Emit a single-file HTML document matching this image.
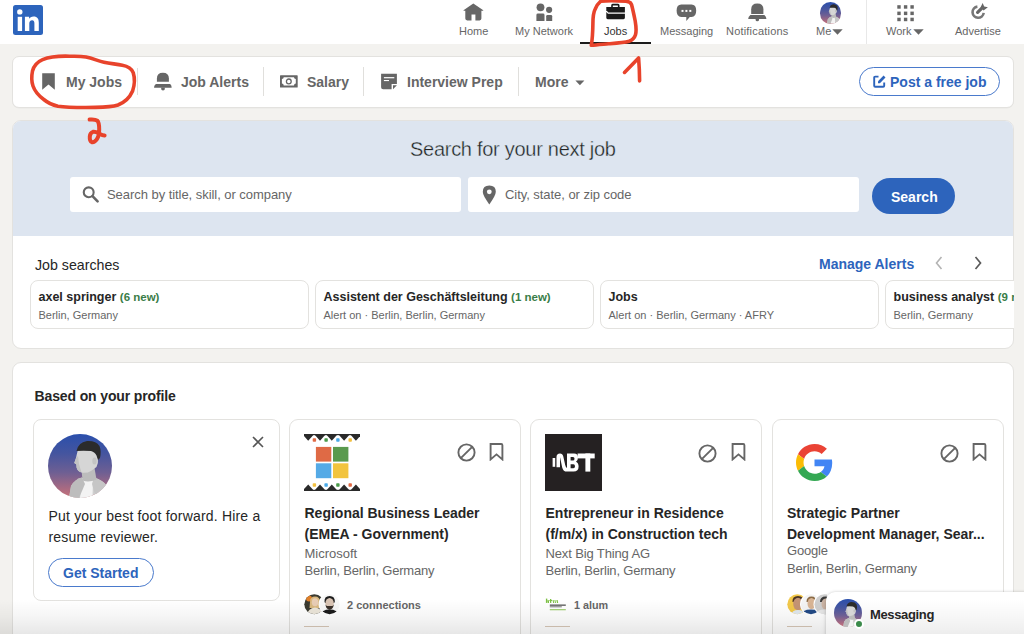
<!DOCTYPE html>
<html><head><meta charset="utf-8">
<style>
*{margin:0;padding:0;box-sizing:border-box}
html,body{width:1024px;height:634px;overflow:hidden}
body{background:#f3f2ef;font-family:"Liberation Sans",sans-serif;position:relative;color:#1f1f1f}
.abs{position:absolute}
.nav{position:absolute;left:0;top:0;width:1024px;height:44px;background:#fff}
.ni{position:absolute;top:0;height:44px;text-align:center;font-size:11px;color:#666;white-space:nowrap}
.ni svg{position:absolute}
.nl{position:absolute;top:25px;white-space:nowrap;line-height:12px;font-size:11px;color:#666}
.card{position:absolute;background:#fff;border:1px solid #e3e2df;border-radius:9px}
.sub{font-size:14px;font-weight:bold;color:#666;white-space:nowrap;line-height:16px}
.div{position:absolute;width:1px;background:#e0dfdc}
.hero{position:absolute;left:12px;top:120px;width:1002px;height:116px;background:#dde5f0;border-radius:9px 9px 0 0}
.inp{position:absolute;background:#fff;border-radius:3px;height:35px;top:177px}
.ph{position:absolute;font-size:13px;color:#666;white-space:nowrap;line-height:15px;letter-spacing:-0.05px}
.pill{position:absolute;background:#fff;border:1px solid #e3e2df;border-radius:8px;height:49px;top:280px}
.pt{position:absolute;left:7.5px;top:9px;font-size:12.5px;font-weight:bold;color:#262626;white-space:nowrap;line-height:15px}
.pt span{color:#3a7d48;font-size:11.5px}
.ps{position:absolute;left:7.5px;top:27.5px;font-size:11px;color:#666;white-space:nowrap;line-height:13px}
.jc{position:absolute;background:#fff;border:1px solid #e3e2df;border-radius:9px;top:419px;height:240px}
.jt{position:absolute;font-size:14px;font-weight:bold;color:#262626;line-height:21px;white-space:nowrap}
.jco{position:absolute;font-size:13px;color:#666;white-space:nowrap;line-height:16px}
.loc{letter-spacing:-0.2px}
.red{position:absolute;left:0;top:0}
</style></head>
<body>
<!-- NAV -->
<div class="nav">
  <svg class="abs" style="left:13px;top:5px" width="30" height="30" viewBox="0 0 30 30">
    <rect x="0" y="0" width="30" height="30" rx="2.5" fill="#2d64bc"/>
    <circle cx="6.8" cy="6.9" r="2.7" fill="#fff"/>
    <rect x="4.7" y="11.8" width="4.4" height="14.2" fill="#fff"/>
    <path d="M11.9 11.8h4.2v2c.7-1.3 2.3-2.3 4.4-2.3 4 0 5.3 2.4 5.3 6V26h-4.4v-7.6c0-1.8-.4-3.2-2.3-3.2-1.9 0-2.8 1.4-2.8 3.4V26h-4.4z" fill="#fff"/>
  </svg>

  <!-- Home -->
  <svg class="abs" style="left:463px;top:3px" width="21" height="18" viewBox="0 0 21 18">
    <path d="M10.3 0.6 L20.3 7.2 L20.2 7.8 L18.4 7.8 L18.4 15.6 Q18.4 17.4 16.6 17.4 L12.4 17.4 L12.4 11.6 L8.5 11.6 L8.5 17.4 L4.2 17.4 Q2.3 17.4 2.3 15.6 L2.3 7.8 L0.6 7.8 L0.5 7.2 Z" fill="#666"/>
  </svg>
  <div class="nl" style="left:459px">Home</div>
  <!-- My Network -->
  <svg class="abs" style="left:536px;top:3px" width="17" height="19" viewBox="0 0 17 19">
    <circle cx="4.5" cy="4.3" r="3.9" fill="#666"/>
    <path d="M0.4 11.9 Q0.4 10.5 2 10.5 L7 10.5 Q8.5 10.5 8.5 11.9 L8.5 18 L0.4 18 Z" fill="#666"/>
    <circle cx="13.1" cy="6.8" r="3.1" fill="#666"/>
    <path d="M10.2 13.3 Q10.2 12.1 11.4 12.1 L15 12.1 Q16.2 12.1 16.2 13.3 L16.2 18 L10.2 18 Z" fill="#666"/>
  </svg>
  <div class="nl" style="left:515px">My Network</div>
  <!-- Jobs -->
  <svg class="abs" style="left:605px;top:3px" width="22" height="18" viewBox="0 0 22 18">
    <path d="M6.2 4 L6.2 2.2 Q6.2 0.7 7.7 0.7 L13 0.7 Q14.5 0.7 14.5 2.2 L14.5 4 L12.9 4 L12.9 2.4 L7.8 2.4 L7.8 4 Z" fill="#1b1b1b"/>
    <path d="M1.3 4 L19.9 4 L19.9 9.6 L3.3 9.6 L1.3 7.3 Z" fill="#1b1b1b"/>
    <path d="M1.3 9 L3.0 10.8 L19.9 10.8 L19.9 14.8 Q19.9 16.2 18.5 16.2 L2.7 16.2 Q1.3 16.2 1.3 14.8 Z" fill="#1b1b1b"/>
  </svg>
  <div class="nl" style="left:604px;color:#333">Jobs</div>
  <div class="abs" style="left:580px;top:42px;width:71px;height:2px;background:#1b1b1b"></div>
  <!-- Messaging -->
  <svg class="abs" style="left:676px;top:4px" width="21" height="18" viewBox="0 0 21 18">
    <path d="M5.3 0.4 L15.5 0.4 Q20.2 0.4 20.2 6.5 Q20.2 13 15.5 13 L13.8 13 L10.3 17 L10.3 13 L5.3 13 Q0.6 13 0.6 6.5 Q0.6 0.4 5.3 0.4 Z" fill="#666"/>
    <rect x="5.5" y="5.9" width="2" height="2" fill="#fff"/>
    <rect x="9.4" y="5.9" width="2" height="2" fill="#fff"/>
    <rect x="13.3" y="5.9" width="2" height="2" fill="#fff"/>
  </svg>
  <div class="nl" style="left:660px">Messaging</div>
  <!-- Notifications -->
  <svg class="abs" style="left:748px;top:3px" width="19" height="19" viewBox="0 0 19 19">
    <path d="M3.2 10.9 L3.2 6.3 Q3.2 0.4 9.3 0.4 Q15.4 0.4 15.4 6.3 L15.4 10.9 Z" fill="#666"/>
    <path d="M2.4 12.1 L16.4 12.1 Q18.3 14 18.3 15.2 L18.3 15.9 L0.3 15.9 L0.3 15.2 Q0.3 14 2.4 12.1 Z" fill="#666"/>
    <path d="M7.6 15.5 L11 15.5 L11 17 Q11 18.3 9.3 18.3 Q7.6 18.3 7.6 17 Z" fill="#666"/>
  </svg>
  <div class="nl" style="left:726px;letter-spacing:0.2px">Notifications</div>
  <!-- Me -->
  <div class="abs" style="left:819.5px;top:2.3px;width:21.5px;height:21.5px;border-radius:50%;overflow:hidden;background:linear-gradient(180deg,#2a4fac 0%,#44559f 30%,#6e5f93 60%,#a86a82 85%,#c9737a 100%)">
  <svg width="21.5" height="21.5" viewBox="0 0 64 64" class="abs" style="left:0;top:0">
    <path d="M21 64 L23 52 Q27 45 34 43.5 L38 47.5 L46 43.5 Q55 46 59 52 L63 64 Z" fill="#cfcfcf"/>
    <path d="M34 44 L45 44.5 L44.5 64 L32 64 Z" fill="#f3f3f3"/>
    <path d="M23 52 Q27 45 34 43.5 L37 50 L31 64 L21 64 Z" fill="#bdbdbd"/>
    <path d="M46 43.5 Q55 46 59 52 L63 64 L48 64 L44 50 Z" fill="#c6c6c6"/>
    <path d="M33.5 36 L46.5 34 L48.5 45.5 Q41 49 34.5 46.5 Z" fill="#bcbcbc"/>
    <path d="M30 15.5 Q28.5 21 28 24 L26.3 29 L28.4 30.4 L28.6 33.5 Q29.5 37.5 33.5 38.6 Q39 39.5 43 37 L48.5 33 Q50.5 28.5 50 24 L48 17 Q40 13 30 15.5 Z" fill="#d6d6d6"/>
    <path d="M28 24 L26.3 29 L28.4 30.4 L28.6 33.5 Q29.5 37.5 33.5 38.6 L31 30 L30 22 Z" fill="#c2c2c2"/>
    <path d="M28.5 17 Q30 8.5 39 7 Q48 6.5 51.5 12 Q53.5 17 52 24 L50 26 L48.5 21.5 Q47 18 43 17 Q35 16.5 28.5 17 Z" fill="#2b2b2b"/>
    <ellipse cx="46.5" cy="27" rx="2.2" ry="3.6" fill="#c4c4c4"/>
  </svg>
</div>
  <div class="nl" style="left:816px">Me</div>
  <svg class="abs" style="left:832px;top:29px" width="11" height="6" viewBox="0 0 11 6"><path d="M0.3 0.2 L10.7 0.2 L5.5 5.8 Z" fill="#666"/></svg>
  <div class="abs" style="left:866px;top:0;width:1px;height:44px;background:#e8e8e8"></div>
  <!-- Work -->
  <svg class="abs" style="left:897px;top:5px" width="17" height="17" viewBox="0 0 17 17">
    <g fill="#666">
    <rect x="0.3" y="0.2" width="3.4" height="3.5"/><rect x="6.9" y="0.2" width="3.4" height="3.5"/><rect x="13.4" y="0.2" width="3.4" height="3.5"/>
    <rect x="0.3" y="6.6" width="3.4" height="3.5"/><rect x="6.9" y="6.6" width="3.4" height="3.5"/><rect x="13.4" y="6.6" width="3.4" height="3.5"/>
    <rect x="0.3" y="12.7" width="3.4" height="3.5"/><rect x="6.9" y="12.7" width="3.4" height="3.5"/><rect x="13.4" y="12.7" width="3.4" height="3.5"/>
    </g>
  </svg>
  <div class="nl" style="left:886px">Work</div>
  <svg class="abs" style="left:913px;top:29px" width="11" height="6" viewBox="0 0 11 6"><path d="M0.3 0.2 L10.7 0.2 L5.5 5.8 Z" fill="#666"/></svg>
  <!-- Advertise -->
  <svg class="abs" style="left:969px;top:2px" width="21" height="19" viewBox="0 0 21 19">
    <path d="M8.4 4.6 A5.6 5.6 0 1 0 14.7 10.9" fill="none" stroke="#777" stroke-width="2.6"/>
    <path d="M8.6 10.4 L13.4 5.6" stroke="#666" stroke-width="3.2" stroke-linecap="round"/>
    <path d="M11.6 5.2 L13.6 0.9 L15.2 4.4 L18.9 5.3 L14.6 8.6 Z" fill="#666"/>
  </svg>
  <div class="nl" style="left:955px">Advertise</div>
</div>

<!-- SUBNAV -->
<div class="card" style="left:12px;top:56px;width:1002px;height:51.5px;border-radius:7px;box-shadow:0 0.5px 0.5px rgba(0,0,0,0.04)"></div>
<svg class="abs" style="left:42px;top:73px" width="13" height="17" viewBox="0 0 13 17"><path d="M0.2 0.2 L12.8 0.2 L12.8 16.8 L6.5 11.4 L0.2 16.8 Z" fill="#666"/></svg>
<div class="abs sub" style="left:66px;top:74px">My Jobs</div>
<div class="div" style="left:137px;top:68px;height:27px"></div>
<svg class="abs" style="left:154px;top:72px" width="18" height="19" viewBox="0 0 18 19">
  <path d="M2.9 9.85 L2.9 6.5 Q2.9 0.7 8.9 0.7 Q14.9 0.7 14.9 6.5 L14.9 9.85 Z" fill="#666"/>
  <path d="M1.9 12 L16.2 12 Q17.6 13.5 17.6 15 L17.6 15.8 L0.1 15.8 L0.1 15 Q0.1 13.5 1.9 12 Z" fill="#666"/>
  <path d="M7.2 15.5 L10.8 15.5 L10.8 17 Q10.8 18.4 9 18.4 Q7.2 18.4 7.2 17 Z" fill="#666"/>
</svg>
<div class="abs sub" style="left:181px;top:74px">Job Alerts</div>
<div class="div" style="left:263px;top:67px;height:29px"></div>
<svg class="abs" style="left:280px;top:75px" width="18" height="13" viewBox="0 0 18 13">
  <rect x="0" y="0.3" width="17.7" height="12.2" rx="0.6" fill="#666"/>
  <path d="M3.7 2.2 L14.0 2.2 A1.8 1.8 0 0 0 15.8 4.0 L15.8 8.6 A1.8 1.8 0 0 0 14.0 10.4 L3.7 10.4 A1.8 1.8 0 0 0 1.9 8.6 L1.9 4.0 A1.8 1.8 0 0 0 3.7 2.2 Z" fill="#fff"/>
  <circle cx="8.8" cy="6.4" r="2.4" fill="none" stroke="#666" stroke-width="1.3"/>
</svg>
<div class="abs sub" style="left:307px;top:74px">Salary</div>
<div class="div" style="left:363px;top:67px;height:29px"></div>
<svg class="abs" style="left:381px;top:73px" width="17" height="17" viewBox="0 0 17 17">
  <path d="M0.1 0.75 L15.9 0.75 L15.9 11 L10.6 11 L10.6 16.3 L2.1 16.3 Q0.1 16.3 0.1 14.3 Z" fill="#666"/>
  <path d="M12 12.2 L15.9 12.2 L12 16.2 Z" fill="#666"/>
  <rect x="2.9" y="4.1" width="10.4" height="1.2" fill="#fff"/><rect x="2.9" y="7.0" width="5.1" height="1.1" fill="#fff"/>
</svg>
<div class="abs sub" style="left:407px;top:74px">Interview Prep</div>
<div class="div" style="left:518px;top:67px;height:29px"></div>
<div class="abs sub" style="left:535px;top:74px">More</div>
<svg class="abs" style="left:575px;top:80px" width="10" height="6" viewBox="0 0 10 6"><path d="M0.4 0.6 L9.4 0.6 L4.9 5.2 Z" fill="#666"/></svg>
<div class="abs" style="left:859px;top:67px;width:141px;height:29px;border:1px solid #4a7acc;border-radius:15px"></div>
<svg class="abs" style="left:873px;top:75px" width="13" height="13" viewBox="0 0 13 13">
  <path d="M5.5 1.6 L2.2 1.6 Q1.2 1.6 1.2 2.6 L1.2 10.8 Q1.2 11.8 2.2 11.8 L10.2 11.8 Q11.2 11.8 11.2 10.8 L11.2 7.4" fill="none" stroke="#2d64bc" stroke-width="1.9"/>
  <path d="M5 8.2 L5 6.2 L10.6 0.6 L12.5 2.5 L6.9 8.2 Z" fill="#2d64bc"/>
</svg>
<div class="abs sub" style="left:890px;top:74px;color:#2d64bc">Post a free job</div>

<!-- SEARCH CARD -->
<div class="card" style="left:12px;top:120px;width:1002px;height:229px;border-radius:9px;overflow:hidden">
  <div class="abs" style="left:0;top:0;width:1000px;height:115px;background:#dde5f0"></div>
</div>
<div class="abs" style="left:410px;top:138px;font-size:20px;color:#222;white-space:nowrap;line-height:23px;letter-spacing:-0.28px;-webkit-text-stroke:0.35px #dde5f0">Search for your next job</div>
<div class="inp" style="left:70px;width:391px"></div>
<svg class="abs" style="left:82px;top:186px" width="19" height="18" viewBox="0 0 19 18">
  <circle cx="6.7" cy="6.3" r="4.95" fill="none" stroke="#666" stroke-width="2.1"/>
  <path d="M10.5 10.2 L15.6 15.3" stroke="#666" stroke-width="2.6" stroke-linecap="round"/>
</svg>
<div class="ph" style="left:107px;top:187px">Search by title, skill, or company</div>
<div class="inp" style="left:468px;width:391px"></div>
<svg class="abs" style="left:482px;top:185px" width="15" height="20" viewBox="0 0 15 20">
  <path d="M7.3 0.4 Q13.8 0.4 13.8 6.8 Q13.8 10.5 7.3 19.4 Q0.8 10.5 0.8 6.8 Q0.8 0.4 7.3 0.4 Z" fill="#666"/>
  <circle cx="7.3" cy="6.8" r="2.4" fill="#fff"/>
</svg>
<div class="ph" style="left:505px;top:187px">City, state, or zip code</div>
<div class="abs" style="left:872px;top:178px;width:83px;height:36px;border-radius:18px;background:#2d64bc"></div>
<div class="abs sub" style="left:891px;top:189px;color:#fff">Search</div>

<div class="abs" style="left:35px;top:257px;font-size:14.2px;color:#262626;white-space:nowrap;line-height:17px">Job searches</div>
<div class="abs sub" style="left:819px;top:256px;color:#2d64bc">Manage Alerts</div>
<svg class="abs" style="left:934px;top:256px" width="10" height="14" viewBox="0 0 10 14"><path d="M7.5 1 L2.5 7 L7.5 13" fill="none" stroke="#b3b3b3" stroke-width="1.6"/></svg>
<svg class="abs" style="left:973px;top:256px" width="10" height="14" viewBox="0 0 10 14"><path d="M2.5 1 L7.5 7 L2.5 13" fill="none" stroke="#5a5a5a" stroke-width="1.7"/></svg>

<div class="pill" style="left:30px;width:279px"><div class="pt">axel springer <span>(6 new)</span></div><div class="ps">Berlin, Germany</div></div>
<div class="pill" style="left:315px;width:279px"><div class="pt">Assistent der Geschäftsleitung <span>(1 new)</span></div><div class="ps">Alert on · Berlin, Berlin, Germany</div></div>
<div class="pill" style="left:600px;width:279px"><div class="pt">Jobs</div><div class="ps">Alert on · Berlin, Germany · AFRY</div></div>
<div class="abs" style="left:885px;top:280px;width:129px;height:49px;overflow:hidden">
  <div class="pill" style="left:0;top:0;width:279px"><div class="pt">business analyst <span>(9 new)</span></div><div class="ps">Berlin, Germany</div></div>
</div>

<!-- PROFILE SECTION -->
<div class="card" style="left:12px;top:362px;width:1002px;height:300px;border-radius:9px"></div>
<div class="abs sub" style="left:34.5px;top:387.5px;color:#262626;letter-spacing:-0.13px">Based on your profile</div>

<!-- Card A -->
<div class="card" style="left:33px;top:419px;width:247px;height:182px;border-radius:8px"></div>
<div class="abs" style="left:48px;top:434px;width:64px;height:64px;border-radius:50%;overflow:hidden;background:linear-gradient(180deg,#2a4fac 0%,#44559f 30%,#6e5f93 60%,#a86a82 85%,#c9737a 100%)">
  <svg width="64" height="64" viewBox="0 0 64 64" class="abs" style="left:0;top:0">
    <path d="M21 64 L23 52 Q27 45 34 43.5 L38 47.5 L46 43.5 Q55 46 59 52 L63 64 Z" fill="#cfcfcf"/>
    <path d="M34 44 L45 44.5 L44.5 64 L32 64 Z" fill="#f3f3f3"/>
    <path d="M23 52 Q27 45 34 43.5 L37 50 L31 64 L21 64 Z" fill="#bdbdbd"/>
    <path d="M46 43.5 Q55 46 59 52 L63 64 L48 64 L44 50 Z" fill="#c6c6c6"/>
    <path d="M33.5 36 L46.5 34 L48.5 45.5 Q41 49 34.5 46.5 Z" fill="#bcbcbc"/>
    <path d="M30 15.5 Q28.5 21 28 24 L26.3 29 L28.4 30.4 L28.6 33.5 Q29.5 37.5 33.5 38.6 Q39 39.5 43 37 L48.5 33 Q50.5 28.5 50 24 L48 17 Q40 13 30 15.5 Z" fill="#d6d6d6"/>
    <path d="M28 24 L26.3 29 L28.4 30.4 L28.6 33.5 Q29.5 37.5 33.5 38.6 L31 30 L30 22 Z" fill="#c2c2c2"/>
    <path d="M28.5 17 Q30 8.5 39 7 Q48 6.5 51.5 12 Q53.5 17 52 24 L50 26 L48.5 21.5 Q47 18 43 17 Q35 16.5 28.5 17 Z" fill="#2b2b2b"/>
    <ellipse cx="46.5" cy="27" rx="2.2" ry="3.6" fill="#c4c4c4"/>
  </svg>
</div>
<svg class="abs" style="left:252px;top:436px" width="12" height="12" viewBox="0 0 12 12"><path d="M1 1 L11 11 M11 1 L1 11" stroke="#555" stroke-width="1.6"/></svg>
<div class="abs" style="left:48.5px;top:506px;width:235px;font-size:14px;color:#262626;line-height:20.5px;letter-spacing:0.19px">Put your best foot forward. Hire a resume reviewer.</div>
<div class="abs" style="left:48px;top:558px;width:106px;height:29px;border:1px solid #4a7acc;border-radius:15px"></div>
<div class="abs sub" style="left:63px;top:565px;color:#2d64bc">Get Started</div>

<!-- Card B -->
<div class="jc" style="left:289px;width:232px"></div>
<svg class="abs" style="left:304px;top:434px" width="56" height="57" viewBox="0 0 56 57">
  <rect width="56" height="57" fill="#fff"/>
  <g fill="#2a2a2a"><path d="M-1.8 0 L10.2 0 L4.2 6.8 Z"/><path d="M10.0 0 L22.0 0 L16.0 6.8 Z"/><path d="M21.8 0 L33.8 0 L27.8 6.8 Z"/><path d="M34.1 0 L46.1 0 L40.1 6.8 Z"/><path d="M45.9 0 L57.9 0 L51.9 6.8 Z"/><path d="M-1.8 57 L10.2 57 L4.2 50.6 Z"/><path d="M10.0 57 L22.0 57 L16.0 50.6 Z"/><path d="M21.8 57 L33.8 57 L27.8 50.6 Z"/><path d="M34.1 57 L46.1 57 L40.1 50.6 Z"/><path d="M45.9 57 L57.9 57 L51.9 50.6 Z"/><rect x="0" y="0" width="56" height="1.2"/><rect x="0" y="55.8" width="56" height="1.2"/></g>
  <rect x="8.7" y="4.3" width="3.4" height="3.4" rx="0.8" fill="#e06a45"/><rect x="20.4" y="4.3" width="3.4" height="3.4" rx="0.8" fill="#4a9a4a"/><rect x="32.2" y="4.3" width="3.4" height="3.4" rx="0.8" fill="#4aaae8"/><rect x="44.5" y="4.3" width="3.4" height="3.4" rx="0.8" fill="#f2c040"/><rect x="8.7" y="49.3" width="3.4" height="3.4" rx="0.8" fill="#f2c040"/><rect x="20.4" y="49.3" width="3.4" height="3.4" rx="0.8" fill="#4aaae8"/><rect x="32.2" y="49.3" width="3.4" height="3.4" rx="0.8" fill="#4a9a4a"/><rect x="44.5" y="49.3" width="3.4" height="3.4" rx="0.8" fill="#e06a45"/>
  <rect x="11.9" y="12.9" width="15.4" height="14.7" fill="#df6a45"/>
  <rect x="29" y="12.9" width="15.4" height="14.7" fill="#5a9a4e"/>
  <rect x="11.9" y="29.3" width="15.4" height="14.9" fill="#55aae6"/>
  <rect x="29" y="29.3" width="15.4" height="14.9" fill="#f2c43e"/>
</svg>
<div class="abs" style="left:304.5px;top:502.5px;font-size:14px;font-weight:bold;color:#262626;line-height:21px;white-space:nowrap">Regional Business Leader<br>(EMEA - Government)</div>
<div class="jco" style="left:304.5px;top:545.8px">Microsoft</div>
<div class="jco" style="left:304.5px;top:563px;letter-spacing:-0.2px">Berlin, Berlin, Germany</div>
<svg class="abs" style="left:304px;top:594px" width="36" height="21" viewBox="0 0 36 21">
  <defs><clipPath id="c1"><circle cx="10.3" cy="10.3" r="10"/></clipPath><clipPath id="c2"><circle cx="25.6" cy="10.3" r="10"/></clipPath></defs>
  <g clip-path="url(#c1)">
    <rect width="21" height="21" fill="#3a3a30"/>
    <circle cx="5" cy="4.5" r="3" fill="#e0802a"/>
    <path d="M6 8 Q6 2.5 11 2.5 Q16 2.5 16 8 L16.5 14 L5.5 14 Z" fill="#d8b880"/>
    <ellipse cx="11" cy="8.2" rx="3.2" ry="4" fill="#e8cdb5"/>
    <path d="M3 21 Q4 14 11 13.5 Q18 14 19 21 Z" fill="#ece6da"/>
  </g>
  <circle cx="25.6" cy="10.3" r="11" fill="#fff"/>
  <g clip-path="url(#c2)">
    <rect x="15" width="21" height="21" fill="#f7f7f7"/>
    <path d="M20.5 8 Q20 2.2 25.6 2 Q31.2 2.2 30.8 8 L30 9 L21.2 9 Z" fill="#1e1e1e"/>
    <ellipse cx="25.6" cy="9.3" rx="4.2" ry="5.2" fill="#d9c4b4"/>
    <path d="M21.5 10.5 Q22 15.5 25.6 15.8 Q29.2 15.5 29.8 10.5 L28.5 12 L22.8 12 Z" fill="#3a302a"/>
    <path d="M17 21 Q17.5 15.5 25.6 15.5 Q33.7 15.5 34.2 21 Z" fill="#1c1c1c"/>
  </g>
</svg>
<div class="abs" style="left:347px;top:599px;font-size:11px;font-weight:bold;color:#666;white-space:nowrap;line-height:13px">2 connections</div>
<div class="abs" style="left:304px;top:626px;width:25px;height:1px;background:#d8c8b8"></div>

<!-- Card C -->
<div class="jc" style="left:530px;width:232px"></div>
<div class="abs" style="left:545px;top:434px;width:57px;height:57px;background:#252122"></div>
<svg class="abs" style="left:545px;top:434px" width="57" height="57" viewBox="0 0 57 57">
  <g fill="#fff">
    <rect x="7.6" y="24" width="2.6" height="8.8"/>
    <path d="M11.5 33.2 L11.5 23 Q11.5 19.5 15 19.5 Q17.6 19.5 18.3 22.5 L20.2 31 Q20.8 33.6 22 34 L22 37.6 Q18.2 37.6 17.2 33.4 L15.4 25 Q15.2 23.6 15 23.6 L15 33.2 Z"/>
    <path fill-rule="evenodd" d="M22 19.5 L29 19.5 Q33 19.5 33 23.6 Q33 26.4 31 27.8 Q33.6 29 33.6 32.6 Q33.6 37.6 28.6 37.6 L22 37.6 Z M25.6 22.9 L25.6 26.6 L28 26.6 Q29.5 26.6 29.5 24.7 Q29.5 22.9 28 22.9 Z M25.6 30.3 L25.6 34.2 L28.4 34.2 Q30 34.2 30 32.2 Q30 30.3 28.4 30.3 Z"/>
    <rect x="32.6" y="19.5" width="17.1" height="4.9"/>
    <rect x="40.4" y="19.5" width="4.9" height="18.1"/>
  </g>
</svg>
<div class="abs" style="left:545.5px;top:502.5px;font-size:14px;font-weight:bold;color:#262626;line-height:21px;white-space:nowrap">Entrepreneur in Residence<br>(f/m/x) in Construction tech</div>
<div class="jco" style="left:545.5px;top:545.8px;letter-spacing:-0.13px">Next Big Thing AG</div>
<div class="jco" style="left:545.5px;top:563px;letter-spacing:-0.2px">Berlin, Berlin, Germany</div>
<svg class="abs" style="left:545px;top:598px" width="22" height="14" viewBox="0 0 22 14">
  <g fill="#7cc043"><rect x="0.9" y="0.6" width="1.4" height="4.3"/><path d="M2.2 2.2 L4 2.2 L4 4.9 L2.8 4.9 Z"/><rect x="5" y="1" width="1.3" height="3.9"/><rect x="4.4" y="2" width="2.6" height="1"/><path d="M7.5 2 L8.6 2 L9.2 4.9 L8.2 4.9 Z M9.4 2 L10.4 2 L11 4.9 L10 4.9 Z M11.4 2 L12.6 2 L13.2 4.9 L12 4.9 Z"/></g>
  <rect x="4.8" y="6.5" width="16" height="1.3" fill="#555"/><rect x="4.8" y="8.3" width="12" height="1" fill="#777"/>
  <rect x="4.8" y="11" width="16" height="1.3" fill="#a6d27a"/>
</svg>
<div class="abs" style="left:574px;top:599px;font-size:10.8px;font-weight:bold;color:#666;white-space:nowrap;line-height:13px">1 alum</div>
<div class="abs" style="left:545px;top:626px;width:25px;height:1px;background:#d8c8b8"></div>

<!-- Card D -->
<div class="jc" style="left:772px;width:232px"></div>
<svg class="abs" style="left:796px;top:444px" width="37" height="37" viewBox="0 0 48 48">
  <path fill="#EA4335" d="M24 9.5c3.54 0 6.71 1.22 9.21 3.6l6.85-6.85C35.9 2.38 30.47 0 24 0 14.62 0 6.51 5.38 2.56 13.22l7.98 6.19C12.43 13.72 17.74 9.5 24 9.5z"/>
  <path fill="#4285F4" d="M46.98 24.55c0-1.57-.15-3.09-.38-4.55H24v9.02h12.94c-.58 2.96-2.26 5.48-4.78 7.18l7.73 6c4.51-4.18 7.09-10.36 7.09-17.65z"/>
  <path fill="#FBBC05" d="M10.53 28.59c-.48-1.45-.76-2.99-.76-4.59s.27-3.14.76-4.59l-7.98-6.19C.92 16.46 0 20.12 0 24c0 3.88.92 7.54 2.56 10.78l7.97-6.19z"/>
  <path fill="#34A853" d="M24 48c6.48 0 11.93-2.13 15.89-5.81l-7.73-6c-2.15 1.45-4.92 2.3-8.16 2.3-6.26 0-11.57-4.22-13.47-9.91l-7.98 6.19C6.51 42.62 14.62 48 24 48z"/>
</svg>
<div class="abs" style="left:787px;top:503px;font-size:14px;font-weight:bold;color:#262626;line-height:21px;white-space:nowrap">Strategic Partner<br>Development Manager, Sear...</div>
<div class="jco" style="left:787px;top:543.4px;letter-spacing:-0.2px">Google</div>
<div class="jco" style="left:787px;top:561px;letter-spacing:-0.2px">Berlin, Berlin, Germany</div>
<svg class="abs" style="left:787px;top:594px" width="40" height="21" viewBox="0 0 40 21">
  <defs><clipPath id="d1"><circle cx="10.3" cy="10.3" r="10"/></clipPath><clipPath id="d2"><circle cx="24" cy="10.3" r="10"/></clipPath><clipPath id="d3"><circle cx="37.5" cy="10.3" r="10"/></clipPath></defs>
  <g clip-path="url(#d1)">
    <rect width="21" height="21" fill="#f2c84a"/>
    <path d="M5.5 8 Q5 2 11 2 Q17 2 16.5 8 Z" fill="#4a3424"/>
    <ellipse cx="11" cy="10" rx="4.8" ry="6.2" fill="#c49474"/>
    <path d="M4 21 Q5 16 11 16 Q17 16 18 21 Z" fill="#e0e8f0"/>
  </g>
  <circle cx="24" cy="10.3" r="11" fill="#fff"/>
  <g clip-path="url(#d2)">
    <rect x="13" width="22" height="21" fill="#f4f4f4"/>
    <path d="M19.5 8 Q19.5 2.5 24.5 2.5 Q29.5 2.5 29 8 Z" fill="#8a6a44"/>
    <ellipse cx="24.5" cy="9.5" rx="4" ry="5.6" fill="#d8b494"/>
    <path d="M14 21 Q15 15.5 24 15.5 Q33 15.5 34 21 Z" fill="#234a86"/>
  </g>
  <circle cx="37.5" cy="10.3" r="11" fill="#fff"/>
  <g clip-path="url(#d3)">
    <rect x="27" width="22" height="21" fill="#cfcfcf"/>
    <path d="M33 8 Q33 2.5 38.5 2.5 Q43 2.5 43 8 Z" fill="#3a3a3a"/>
    <ellipse cx="38.5" cy="10" rx="4" ry="5.6" fill="#cdb6a6"/>
    <path d="M28 21 Q29 15.5 38 15.5 Q47 15.5 48 21 Z" fill="#e8e8e8"/>
  </g>
</svg>
<div class="abs" style="left:787px;top:626px;width:25px;height:1px;background:#d8c8b8"></div>

<!-- action icons -->
<svg class="abs" style="left:457px;top:442.5px" width="19" height="19" viewBox="0 0 19 19"><circle cx="9.5" cy="9.5" r="8.1" fill="none" stroke="#666" stroke-width="1.9"/><path d="M3.8 15.2 L15.2 3.8" stroke="#666" stroke-width="1.9"/></svg>
<svg class="abs" style="left:489px;top:443.4px" width="15" height="18" viewBox="0 0 15 18"><path d="M1.6 1 L12.2 1 Q13.4 1 13.4 2.2 L13.4 16.4 L7.5 11.4 L1.6 16.4 Z" fill="none" stroke="#666" stroke-width="1.9" stroke-linejoin="miter"/></svg>
<svg class="abs" style="left:698px;top:443.5px" width="19" height="19" viewBox="0 0 19 19"><circle cx="9.5" cy="9.5" r="8.1" fill="none" stroke="#666" stroke-width="1.9"/><path d="M3.8 15.2 L15.2 3.8" stroke="#666" stroke-width="1.9"/></svg>
<svg class="abs" style="left:731px;top:443.4px" width="15" height="18" viewBox="0 0 15 18"><path d="M1.6 1 L12.2 1 Q13.4 1 13.4 2.2 L13.4 16.4 L7.5 11.4 L1.6 16.4 Z" fill="none" stroke="#666" stroke-width="1.9"/></svg>
<svg class="abs" style="left:940px;top:443.5px" width="19" height="19" viewBox="0 0 19 19"><circle cx="9.5" cy="9.5" r="8.1" fill="none" stroke="#666" stroke-width="1.9"/><path d="M3.8 15.2 L15.2 3.8" stroke="#666" stroke-width="1.9"/></svg>
<svg class="abs" style="left:972px;top:443.4px" width="15" height="18" viewBox="0 0 15 18"><path d="M1.6 1 L12.2 1 Q13.4 1 13.4 2.2 L13.4 16.4 L7.5 11.4 L1.6 16.4 Z" fill="none" stroke="#666" stroke-width="1.9"/></svg>

<!-- bottom fade -->
<div class="abs" style="left:0;top:599px;width:1024px;height:35px;background:linear-gradient(to bottom,rgba(0,0,0,0) 0%,rgba(0,0,0,0.04) 50%,rgba(0,0,0,0.095) 100%)"></div>

<!-- Messaging overlay -->
<div class="abs" style="left:826px;top:592px;width:210px;height:60px;background:#fff;border-radius:9px 0 0 0;box-shadow:0 0 3px rgba(0,0,0,0.18),0 2px 6px rgba(0,0,0,0.08)"></div>
<div class="abs" style="left:826px;top:599px;width:198px;height:35px;background:linear-gradient(to bottom,rgba(0,0,0,0) 0%,rgba(0,0,0,0.03) 50%,rgba(0,0,0,0.07) 100%)"></div>
<div class="abs" style="left:834px;top:599px;width:28px;height:28px;border-radius:50%;overflow:hidden;background:linear-gradient(180deg,#2a4fac 0%,#44559f 30%,#6e5f93 60%,#a86a82 85%,#c9737a 100%)">
  <svg width="28" height="28" viewBox="0 0 64 64" class="abs" style="left:0;top:0">
    <path d="M21 64 L23 52 Q27 45 34 43.5 L38 47.5 L46 43.5 Q55 46 59 52 L63 64 Z" fill="#cfcfcf"/>
    <path d="M34 44 L45 44.5 L44.5 64 L32 64 Z" fill="#f3f3f3"/>
    <path d="M23 52 Q27 45 34 43.5 L37 50 L31 64 L21 64 Z" fill="#bdbdbd"/>
    <path d="M46 43.5 Q55 46 59 52 L63 64 L48 64 L44 50 Z" fill="#c6c6c6"/>
    <path d="M33.5 36 L46.5 34 L48.5 45.5 Q41 49 34.5 46.5 Z" fill="#bcbcbc"/>
    <path d="M30 15.5 Q28.5 21 28 24 L26.3 29 L28.4 30.4 L28.6 33.5 Q29.5 37.5 33.5 38.6 Q39 39.5 43 37 L48.5 33 Q50.5 28.5 50 24 L48 17 Q40 13 30 15.5 Z" fill="#d6d6d6"/>
    <path d="M28 24 L26.3 29 L28.4 30.4 L28.6 33.5 Q29.5 37.5 33.5 38.6 L31 30 L30 22 Z" fill="#c2c2c2"/>
    <path d="M28.5 17 Q30 8.5 39 7 Q48 6.5 51.5 12 Q53.5 17 52 24 L50 26 L48.5 21.5 Q47 18 43 17 Q35 16.5 28.5 17 Z" fill="#2b2b2b"/>
    <ellipse cx="46.5" cy="27" rx="2.2" ry="3.6" fill="#c4c4c4"/>
  </svg>
</div>
<div class="abs" style="left:854px;top:619px;width:10px;height:10px;border-radius:50%;background:#3b8a4a;border:2px solid #fff"></div>
<div class="abs" style="left:870px;top:607px;font-size:13px;letter-spacing:-0.35px;font-weight:bold;color:#262626;white-space:nowrap;line-height:15px">Messaging</div>

<!-- RED ANNOTATIONS -->
<svg class="abs" style="left:0;top:0" width="1024" height="634" viewBox="0 0 1024 634">
  <g fill="none" stroke="#e8432b" stroke-width="3.6" stroke-linecap="round" stroke-linejoin="round">
    <path d="M600.8 1.2 C606 0.6 620 0.8 626 1.2 C629 1.6 631 2.6 631.5 4.5 C633 10 634.2 16 635.2 21 C636.2 27 636.6 31 635.5 34.7 C634.5 38 632.5 40 629 41.2 C624 42.6 616 43.2 608.7 43.8 C602 44.4 596 45 591.3 45.3 C592.6 38 592.8 30 592.9 23.7 C592.9 18 593.2 13 595 9.5 C596.5 6 598.5 3 600.8 1.2"/>
    <path d="M69.5 56.2 C60 55.9 49 57 42.6 59.6 C37 62 33.8 66 32.5 71 C31.5 76 31.6 82 33 86 C34.4 90 39 96 43.8 99.5 C48 103 52 105 58 106.2 C66 107.4 80 107.6 95.3 107.4 C105 107.2 113 106.6 118 105 C124 102.6 130 97 132.6 91 C134.6 85 134.6 77 133.2 72.6 C131.6 68.6 127 66 122.3 65.2 C116 64 110 63.6 104 62.3 C98 61 93 58.4 86 57 C80 56 75 56.4 69.5 56.2"/>
    <path d="M624.5 72.4 L638.6 58 L639.3 69 L639.6 80.9"/>
    <path stroke-width="4" d="M89.6 119.5 C92 119.3 95.5 119.3 97.2 120.6 C98.8 122 99.2 126 99.2 129.5 C99.2 133 98.5 137 96.8 139.4 C95.5 141.2 93.5 142.5 91.8 142.2 C90 141.6 89.6 139 89.8 136.5 C90 134 91 132.4 93 131.8 C95.5 131.2 98 133 100 134 C101.5 134.8 103 135.4 104.6 135.6"/>
  </g>
</svg>
</body></html>
